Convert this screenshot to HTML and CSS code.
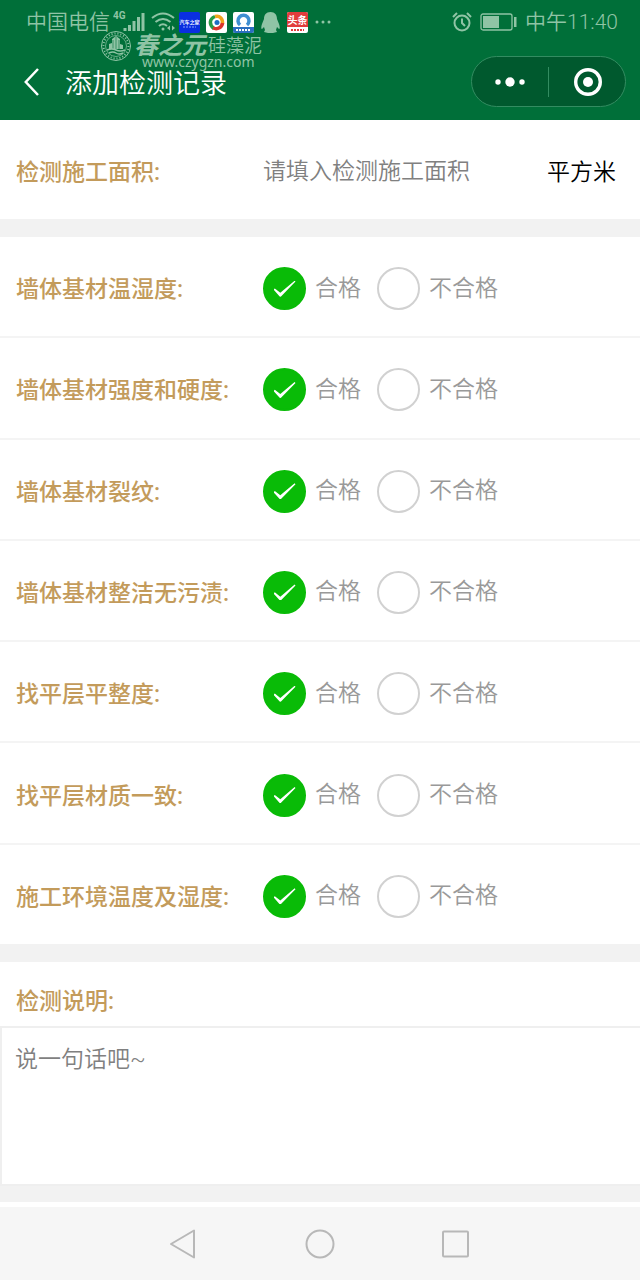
FILE: index.html
```
<!DOCTYPE html>
<html lang="zh-CN">
<head>
    <meta charset="utf-8">
    <meta name="viewport" content="width=device-width, initial-scale=1">
    <title>添加检测记录</title>
    <link rel="stylesheet" href="styles.css">
</head>
<body>
    <header class="header">
        <div class="status-bar">
            <span class="carrier">中国电信</span>
            <svg class="signal" width="32" height="24" viewBox="0 0 32 24">
                <text x="0" y="9" class="net">4G</text>
                <path d="M12 21v-3M16.500 21v-6M21 21v-10M25.500 21v-14M30 21v-18" stroke="currentColor" stroke-width="3"/>
            </svg>
            <svg class="wifi" width="24" height="22" viewBox="0 0 24 22" fill="none" stroke="currentColor" stroke-width="2">
                <path d="M1 7Q12-2 23 7M4.500 11Q12 5 19.500 11M8 15Q12 11.500 16 15"/>
                <circle cx="12" cy="18" r="1.500" fill="currentColor" stroke="none"/>
                <path d="M16 17l3-2.500v5zM24 17l-3-2.500v5z" fill="currentColor" stroke="none"/>
            </svg>
            <svg class="app-icon" width="21" height="21" viewBox="0 0 21 21">
                <rect width="21" height="21" rx="2" fill="#0a2fe0"/>
                <text x="10.500" y="12" class="tiny" fill="#fff" text-anchor="middle">汽车之家</text>
                <path d="M4 15h13" stroke="#8ea6ff" stroke-dasharray="2 1"/>
            </svg>
            <svg class="app-icon" width="21" height="21" viewBox="0 0 21 21" fill="none" stroke-width="3.500">
                <rect width="21" height="21" rx="2" fill="#fff"/>
                <path d="M8 16.500C3 13 3 7 9 4.500" stroke="#279b45"/>
                <path d="M9 4.500C14 3 17 7 16.500 12" stroke="#f0a41c"/>
                <path d="M16.500 11C16 15 12 18 7 16" stroke="#d9342b"/>
                <circle cx="11" cy="10.500" r="2.500" fill="#1c6fc4"/>
            </svg>
            <svg class="app-icon" width="21" height="21" viewBox="0 0 21 21">
                <rect width="21" height="21" rx="2" fill="#fff"/>
                <path d="M7 13A5.500 5.500 0 1 1 14 13" fill="none" stroke="#3f8fd2" stroke-width="3.500"/>
                <path d="M0 15h21v4q0 2-2 2H2q-2 0-2-2z" fill="#2b6fc0"/>
                <path d="M3 18h15" stroke="#fff" stroke-width="2" stroke-dasharray="2 1"/>
            </svg>
            <svg class="app-icon" width="21" height="21" viewBox="0 0 21 21">
                <path d="M10.500 0C6 0 4 3 4 7L2 12c-1 3-1 5 0 5l2-2 1 3-1 2 4 1h5l4-1-1-2 1-3 2 2c1 0 1-2 0-5l-2-5c0-4-2-7-6.500-7z" fill="#8fc4a5"/>
            </svg>
            <svg class="app-icon" width="21" height="21" viewBox="0 0 21 21">
                <rect width="21" height="21" rx="2" fill="#fff"/>
                <path d="M2 0h17q2 0 2 2v13H0V2q0-2 2-2z" fill="#e23c3c"/>
                <text x="10.500" y="12" class="small" fill="#fff" text-anchor="middle">头条</text>
                <path d="M4 18h13" stroke="#e23c3c" stroke-width="2" stroke-dasharray="2 1"/>
            </svg>
            <svg width="18" height="4" viewBox="0 0 18 4" fill="currentColor">
                <circle cx="3" cy="2" r="1.500"/><circle cx="9" cy="2" r="1.500"/><circle cx="15" cy="2" r="1.500"/>
            </svg>
            <div class="status-right">
                <svg width="20" height="20" viewBox="0 0 20 20" fill="none" stroke="currentColor" stroke-width="2">
                    <circle cx="10" cy="11" r="7.500"/>
                    <path d="M10 6.500V11l3 3M1 5l4-4M19 5l-4-4"/>
                </svg>
                <svg width="37" height="18" viewBox="0 0 37 18">
                    <rect x="1" y="1" width="31" height="16" rx="2" fill="none" stroke="currentColor" stroke-width="1.300"/>
                    <path d="M3 3h16v12H3zM34 4h2.500v10H34z" fill="currentColor"/>
                </svg>
                <span>中午11:40</span>
            </div>
        </div>

        <div class="nav-bar">
            <button type="button" class="back" aria-label="返回">
                <svg width="16" height="28" viewBox="0 0 16 28" fill="none" stroke="currentColor" stroke-width="2.500"><path d="M14 1L1.800 14l12.200 13"/></svg>
            </button>
            <h1>添加检测记录</h1>
            <div class="capsule">
                <button type="button" aria-label="更多">
                    <svg width="32" height="12" viewBox="0 0 32 12" fill="currentColor"><circle cx="4" cy="6" r="2.700"/><circle cx="16" cy="6" r="4.700"/><circle cx="28" cy="6" r="2.700"/></svg>
                </button>
                <button type="button" aria-label="关闭">
                    <svg width="30" height="30" viewBox="0 0 30 30"><circle cx="16" cy="15" r="12.300" fill="none" stroke="currentColor" stroke-width="3.400"/><circle cx="16" cy="15" r="5" fill="currentColor"/></svg>
                </button>
            </div>
        </div>

        <div class="watermark">
            <svg width="32" height="32" viewBox="0 0 32 32" fill="none" stroke="currentColor">
                <circle cx="16" cy="16" r="14.500"/>
                <circle cx="16" cy="16" r="12.500" stroke-width="2" stroke-dasharray="1 2"/>
                <circle cx="16" cy="16" r="10.500" stroke-width=".7"/>
                <path d="M9 19v-5l3-1v-4l4-3 4 3v5l3 1v4z" fill="currentColor" stroke="none"/>
                <path d="M16 7v12M13 10v9M19 10v9" stroke="#006f39" stroke-width=".6"/>
                <path d="M7 20q5-2 9 0t9 0M9 23q4-2 7 0t7 0" stroke-width="1.500"/>
            </svg>
            <div class="mark-text">
                <div class="mark-name"><b>春之元</b><span>硅藻泥</span></div>
                <div class="mark-url">www.czygzn.com</div>
            </div>
        </div>
    </header>

    <form class="record">
        <div class="row area">
            <label class="name" for="area">检测施工面积:</label>
            <input type="text" id="area" placeholder="请填入检测施工面积">
            <span class="unit">平方米</span>
        </div>

        <div class="checks">
            <div class="row" role="radiogroup" aria-labelledby="n1">
                <span class="name" id="n1">墙体基材温湿度:</span>
                <label class="option"><input type="radio" name="c1" checked>合格</label>
                <label class="option"><input type="radio" name="c1">不合格</label>
            </div>
            <div class="row" role="radiogroup" aria-labelledby="n2">
                <span class="name" id="n2">墙体基材强度和硬度:</span>
                <label class="option"><input type="radio" name="c2" checked>合格</label>
                <label class="option"><input type="radio" name="c2">不合格</label>
            </div>
            <div class="row" role="radiogroup" aria-labelledby="n3">
                <span class="name" id="n3">墙体基材裂纹:</span>
                <label class="option"><input type="radio" name="c3" checked>合格</label>
                <label class="option"><input type="radio" name="c3">不合格</label>
            </div>
            <div class="row" role="radiogroup" aria-labelledby="n4">
                <span class="name" id="n4">墙体基材整洁无污渍:</span>
                <label class="option"><input type="radio" name="c4" checked>合格</label>
                <label class="option"><input type="radio" name="c4">不合格</label>
            </div>
            <div class="row" role="radiogroup" aria-labelledby="n5">
                <span class="name" id="n5">找平层平整度:</span>
                <label class="option"><input type="radio" name="c5" checked>合格</label>
                <label class="option"><input type="radio" name="c5">不合格</label>
            </div>
            <div class="row" role="radiogroup" aria-labelledby="n6">
                <span class="name" id="n6">找平层材质一致:</span>
                <label class="option"><input type="radio" name="c6" checked>合格</label>
                <label class="option"><input type="radio" name="c6">不合格</label>
            </div>
            <div class="row" role="radiogroup" aria-labelledby="n7">
                <span class="name" id="n7">施工环境温度及湿度:</span>
                <label class="option"><input type="radio" name="c7" checked>合格</label>
                <label class="option"><input type="radio" name="c7">不合格</label>
            </div>
        </div>

        <div class="remark">
            <label class="name" for="remark">检测说明:</label>
            <textarea id="remark" placeholder="说一句话吧~"></textarea>
        </div>
    </form>

    <!-- system keys -->
    <nav class="keys">
        <button type="button" aria-label="后退">
            <svg width="30" height="30" viewBox="0 0 30 30"><path d="M2 15L25 1.500v27z"/></svg>
        </button>
        <button type="button" aria-label="主页">
            <svg width="30" height="30" viewBox="0 0 30 30"><circle cx="15" cy="15" r="13.500"/></svg>
        </button>
        <button type="button" aria-label="任务">
            <svg width="30" height="30" viewBox="0 0 30 30"><rect x="2" y="2.500" width="25" height="25" rx="1"/></svg>
        </button>
    </nav>
</body>
</html>
```
FILE: styles.css
```
* {
    box-sizing: border-box;
}
body {
    margin: 0;
    min-height: 100vh;
    display: flex;
    flex-direction: column;
    background: #fff;
    font-family: Roboto, "Noto Sans CJK SC", sans-serif;
    font-size: 23px;
    font-weight: 350;
    line-height: 32px;
}
button {
    display: flex;
    align-items: center;
    justify-content: center;
    padding: 0;
    border: none;
    background: none;
    color: inherit;
}
input, textarea {
    font: inherit;
    color: #333;
}

/* header */
.header {
    position: relative;
    height: 120px;
    background: #006f39;
    color: #fff;
}
.status-bar {
    display: flex;
    align-items: center;
    gap: 6px;
    height: 44px;
    padding: 0 22px 0 26px;
    font-size: 21px;
    color: #8fc4a5;
}
.signal {
    margin-left: -3px;
}
.wifi {
    margin-right: -2px;
}
.net {
    font-size: 10px;
    font-weight: bold;
    fill: currentColor;
}
.tiny {
    font-size: 5px;
    font-weight: bold;
}
.small {
    font-size: 10px;
    font-weight: bold;
}
.status-right {
    display: flex;
    align-items: center;
    gap: 8px;
    margin-left: auto;
}
.nav-bar {
    display: flex;
    align-items: center;
    height: 75px;
    padding: 0 14px 0 24px;
}
.back {
    margin-right: 25px;
}
h1 {
    margin: 0;
    padding-top: 4px;
    font-size: 27px;
    font-weight: inherit;
}
.capsule {
    display: flex;
    align-items: center;
    width: 155px;
    height: 51px;
    margin-left: auto;
    border: 1px solid #338c61;
    border-radius: 26px;
    background: #00592e;
}
.capsule button {
    flex: 1;
    height: 30px;
}
.capsule button + button {
    border-left: 1px solid #338c61;
}
.watermark {
    position: absolute;
    left: 100px;
    top: 30px;
    display: flex;
    gap: 2px;
    color: #8fc4a5;
    pointer-events: none;
}
.mark-name {
    display: flex;
    align-items: center;
    gap: 2px;
    height: 32px;
    font-size: 18px;
}
.mark-name b {
    font-size: 24px;
    font-style: italic;
    font-weight: 700;
}
.mark-url {
    margin: -8px 0 0 8px;
    font-family: "Noto Sans", sans-serif;
    font-size: 14px;
    font-weight: 400;
    line-height: 16px;
}

/* form */
.record {
    flex: 1;
    display: flex;
    flex-direction: column;
}
.row {
    display: flex;
    align-items: center;
    min-height: 99px;
    padding: 4px 24px 0 16px;
}
.name {
    width: 247px;
    padding-top: 3px;
    color: #c39b5b;
    font-weight: 500;
}
.area input {
    flex: 1;
    min-width: 0;
    padding: 0;
    border: none;
    outline: none;
}
::placeholder {
    color: #808080;
}
.unit {
    padding-top: 3px;
    color: #000;
}
.checks {
    flex: 1;
    display: flex;
    flex-direction: column;
    border: solid #f2f2f2;
    border-width: 18px 0;
}
.checks .row {
    flex: 1;
}
.checks .row + .row {
    border-top: 2px solid #f4f4f4;
}
.option {
    display: flex;
    align-items: center;
    gap: 9px;
    margin-right: 16px;
    color: #999;
}
.option input {
    appearance: none;
    display: flex;
    align-items: center;
    justify-content: center;
    width: 43px;
    height: 43px;
    margin: 0;
    border: 2px solid #d1d1d1;
    border-radius: 50%;
}
.option input:checked {
    border-color: #09bb07;
    background: #09bb07;
}
.option input:checked::before {
    content: "";
    width: 22px;
    height: 16px;
    background: #fff;
    clip-path: polygon(0 56%, 6% 49%, 31% 76%, 96% 0, 100% 6%, 33% 100%, 28% 99%);
}
.remark .name {
    display: block;
    padding: 24px 16px 8px;
}
.remark textarea {
    display: block;
    width: 100%;
    height: 160px;
    padding: 16px 13px;
    border: solid #efefef;
    border-width: 2px 0 2px 2px;
    outline: none;
    resize: none;
}
.remark {
    border-bottom: 16px solid #f2f2f2;
    margin-bottom: 5px;
}

/* bottom keys */
.keys {
    display: flex;
    justify-content: center;
    gap: 106px;
    height: 73px;
    background: #f6f6f6;
}
.keys svg {
    fill: none;
    stroke: #b8b8b8;
    stroke-width: 2;
    stroke-linejoin: round;
}
```
